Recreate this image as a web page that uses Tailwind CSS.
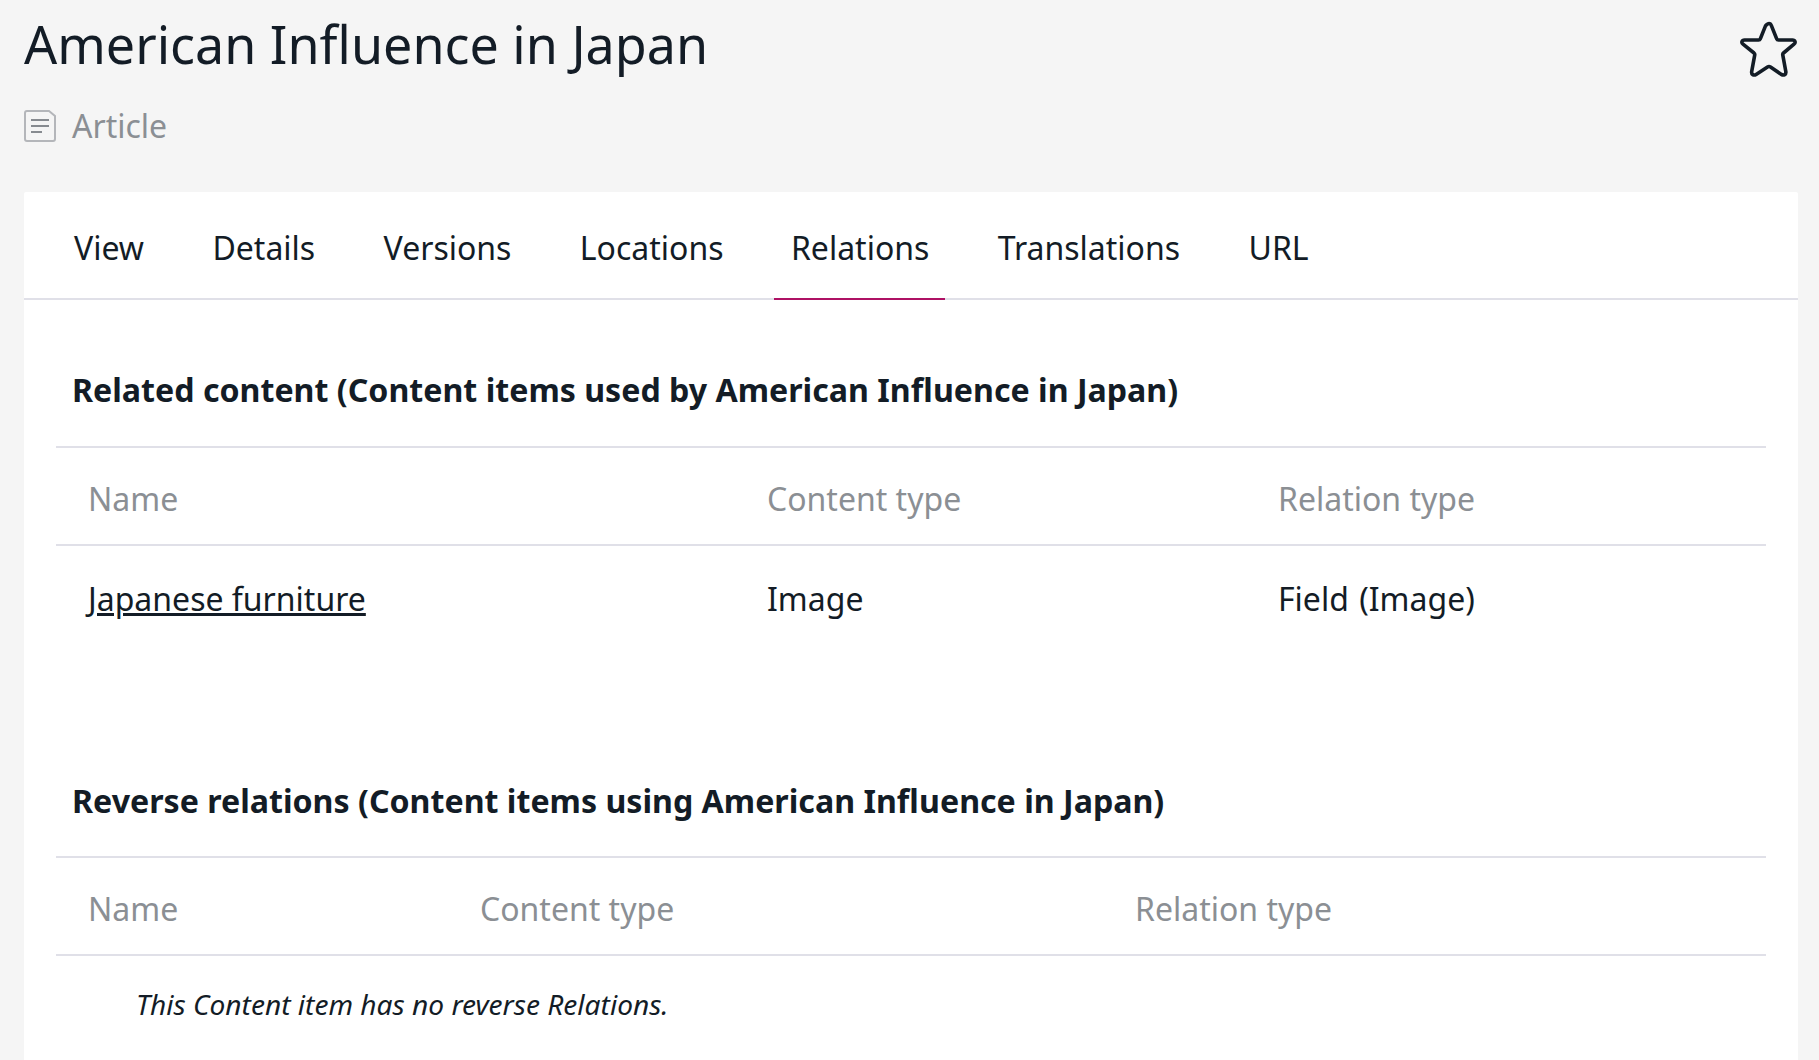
<!DOCTYPE html>
<html lang="en">
<head>
<meta charset="utf-8">
<title>American Influence in Japan</title>
<script src="https://cdn.jsdelivr.net/npm/@tailwindcss/browser@4"></script>
</head>
<body class="bg-[#f5f5f5] h-[1060px] overflow-hidden font-['Noto_Sans',sans-serif] text-[#131c26]">
<div class="flex justify-between pl-6 pr-[21px] h-[192px]">
  <div>
    <h1 class="text-[52px] leading-[66px] mt-[11px]">American Influence in Japan</h1>
    <div class="flex items-center gap-[16px] mt-[27px] text-[#8b8f94] text-[32px] leading-[44px]">
      <svg class="w-8 h-8" viewBox="0 0 32 32" fill="none" stroke="#b4b6ba" stroke-width="2"><path d="M3 1h22l6 5v23a2 2 0 0 1-2 2H3a2 2 0 0 1-2-2V3a2 2 0 0 1 2-2z"/><path d="M7 10h18M7 16h18M7 22h11" stroke="#878b90"/></svg>
      <span>Article</span>
    </div>
  </div>
  <svg class="w-[58px] h-[58px] mt-[21px]" viewBox="0 0 58 58" fill="none" stroke="#131c26" stroke-width="3.6" stroke-linejoin="round"><path d="M29 2.5c1.4 0 2 1 2.500 2.300l5.200 13c.3.800.9 1.200 1.800 1.200h14c2.700 0 3.500 2.600 1.500 4.200L43.500 32c-.7.600-.9 1.300-.7 2.100l3 16.400c.5 3-2 4.400-4.400 2.900L30.500 46c-1-.6-2-.6-3 0l-11.400 7.400c-2.400 1.500-4.900.1-4.400-2.900l3-16.400c.2-.8 0-1.500-.7-2.100L3 23.200c-2-1.600-1.200-4.200 1.500-4.200h14c.9 0 1.500-.4 1.800-1.200l5.200-13C27 3.500 27.600 2.500 29 2.500z"/></svg>
</div>
<main class="mx-6 w-[1774px] h-[868px] bg-white rounded-t-[2px]">
  <nav class="flex h-[108px] border-b-2 border-[#e0e0e8] pl-[34px] text-[32px] leading-[44px]">
    <a class="px-4 pt-[34px] -mb-[2px]">View</a>
    <a class="px-4 pt-[34px] -mb-[2px] ml-[36.4px]">Details</a>
    <a class="px-4 pt-[34px] -mb-[2px] ml-[36.4px]">Versions</a>
    <a class="px-4 pt-[34px] -mb-[2px] ml-[36.4px]">Locations</a>
    <a class="pl-[17px] pr-4 pt-[34px] -mb-[2px] ml-[34.4px] border-b-2 border-[#ae1164]">Relations</a>
    <a class="px-4 pt-[34px] -mb-[2px] ml-[36.4px]">Translations</a>
    <a class="px-4 pt-[34px] -mb-[2px] ml-[36.4px]">URL</a>
  </nav>
  <section class="px-8">
    <h2 class="text-[32.15px] leading-[44px] font-bold pl-4 pt-[68px] pb-[34px] border-b-2 border-[#e0e0e8]">Related content (Content items used by American Influence in Japan)</h2>
    <div class="grid grid-cols-[679px_511px_1fr] pl-8 text-[#8b8f94] text-[32px] leading-[44px] pt-[29px] pb-[23px] border-b-2 border-[#e0e0e8]">
      <div>Name</div><div>Content type</div><div>Relation type</div>
    </div>
    <div class="grid grid-cols-[679px_511px_1fr] pl-8 text-[32px] leading-[44px] pt-[31px]">
      <a class="underline">Japanese furniture</a><div>Image</div><div class="[word-spacing:2px]">Field (Image)</div>
    </div>
    <h2 class="text-[32.15px] leading-[44px] font-bold pl-4 pt-[158px] pb-[33px] border-b-2 border-[#e0e0e8]">Reverse relations (Content items using American Influence in Japan)</h2>
    <div class="grid grid-cols-[392px_655px_1fr] pl-8 text-[#8b8f94] text-[32px] leading-[44px] pt-[29px] pb-[23px] border-b-2 border-[#e0e0e8]">
      <div>Name</div><div>Content type</div><div>Relation type</div>
    </div>
    <p class="pl-[80px] pt-[28px] text-[28.1px] leading-[40px] italic">This Content item has no reverse Relations.</p>
  </section>
</main>
</body>
</html>
